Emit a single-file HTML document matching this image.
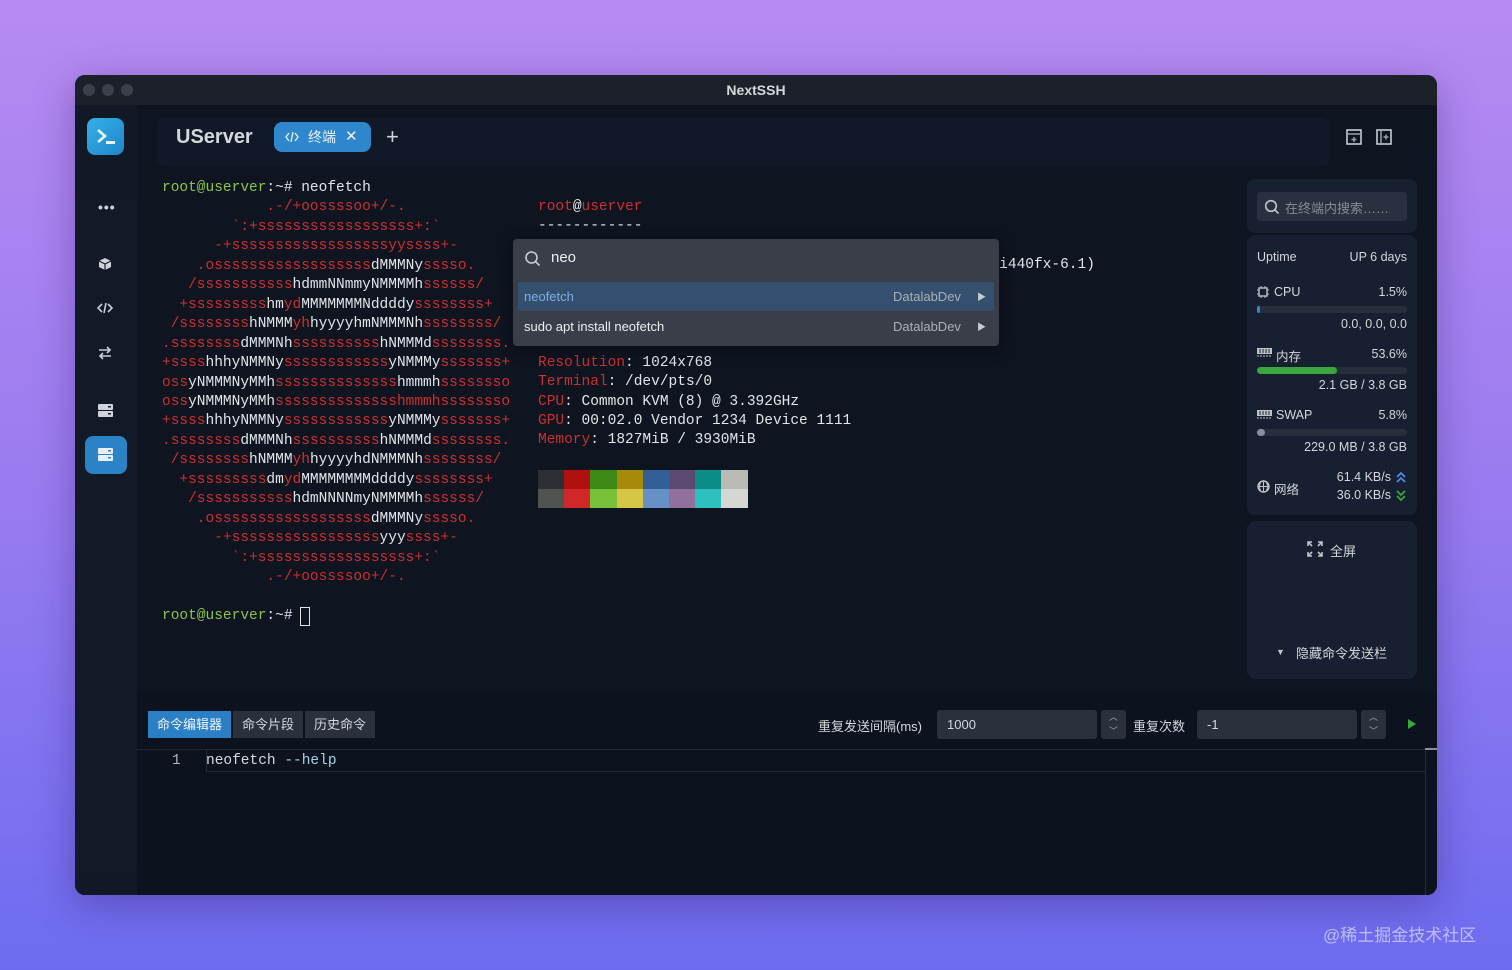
<!DOCTYPE html>
<html><head><meta charset="utf-8"><style>
*{margin:0;padding:0;box-sizing:border-box}
body{width:1512px;height:970px;overflow:hidden;background:linear-gradient(180deg,#b78af2 0%,#9a7cf0 50%,#6d6cf0 100%);font-family:"Liberation Sans","Noto Sans CJK SC",sans-serif;position:relative}
.win{position:absolute;left:75px;top:75px;width:1362px;height:820px;border-radius:10px;background:#0e1420;overflow:hidden;box-shadow:0 10px 40px rgba(40,20,90,.35)}
.title{height:30px;background:#1b2029;position:relative;text-align:center;color:#d6d8dc;font-weight:bold;font-size:14px;line-height:30px}
.dot{position:absolute;top:9px;width:12px;height:12px;border-radius:50%;background:#3c4049}
.side{position:absolute;left:0;top:30px;width:62px;bottom:0;background:#111826}
.sideinner{position:absolute;left:0;top:90px;width:62px;bottom:20px;background:#121a28;border-radius:0 8px 8px 0}
.ab{position:absolute}
.mono{font-family:"Liberation Mono","DejaVu Sans Mono",monospace;font-size:14.5px;white-space:pre;line-height:19.45px}
.r{color:#cc3030}.w{color:#e2e4e8}.g{color:#8cc34b}
.card{position:absolute;background:#172030;border-radius:8px}
.ic{stroke:#c8ccd3;fill:none;stroke-width:1.6}
</style></head><body>
<div class="win">
 <div class="title"><span class="dot" style="left:8px"></span><span class="dot" style="left:27px"></span><span class="dot" style="left:46px"></span>NextSSH</div>
 <div class="side"><div class="sideinner"></div></div>
 <div class="ab" style="left:12px;top:43px;width:37px;height:37px;border-radius:8px;background:linear-gradient(135deg,#35b0e8,#1f86c8)">
  <svg width="37" height="37"><path d="M11 12l7 6-7 6" stroke="#e8f4ff" stroke-width="2.6" fill="none"/><rect x="19" y="23" width="9" height="3" fill="#e8f4ff"/></svg></div>
 <div class="ab" style="left:23px;top:124px;color:#d0d4da;font-size:14px;font-weight:bold;letter-spacing:1px">•••</div>
 <svg class="ab" style="left:22px;top:181px" width="16" height="16"><path d="M8 2l6 3v6l-6 3-6-3V5z" fill="#d0d4da"/><path d="M2 5l6 3 6-3M8 8v6" stroke="#121a28" stroke-width="1.2" fill="none"/></svg>
 <svg class="ab" style="left:21px;top:226px" width="18" height="14"><path d="M6 3L2 7l4 4M12 3l4 4-4 4M10 2L8 12" class="ic"/></svg>
 <svg class="ab" style="left:22px;top:270px" width="16" height="16"><path d="M2 5h11M10 2l3 3-3 3M14 11H3M6 8l-3 3 3 3" class="ic" stroke-width="1.8"/></svg>
 <svg class="ab" style="left:23px;top:329px" width="15" height="14"><rect x="0" y="0" width="15" height="6" rx="1" fill="#d0d4da"/><rect x="0" y="7" width="15" height="6" rx="1" fill="#d0d4da"/><rect x="10" y="2" width="3" height="1.5" fill="#121a28"/><rect x="10" y="9" width="3" height="1.5" fill="#121a28"/></svg>
 <div class="ab" style="left:10px;top:361px;width:42px;height:38px;border-radius:8px;background:#2b82c6"></div>
 <svg class="ab" style="left:23px;top:373px" width="15" height="14"><rect x="0" y="0" width="15" height="6" rx="1" fill="#e6eef6"/><rect x="0" y="7" width="15" height="6" rx="1" fill="#e6eef6"/><rect x="10" y="2" width="3" height="1.5" fill="#2b82c6"/><rect x="10" y="9" width="3" height="1.5" fill="#2b82c6"/></svg>
 <div class="ab" style="left:82px;top:43px;width:1173px;height:48px;background:#111827;border-radius:8px"></div>
 <div class="ab" style="left:101px;top:51px;color:#d4d7dc;font-size:20px;font-weight:bold">UServer</div>
 <div class="ab" style="left:199px;top:47px;width:97px;height:30px;border-radius:8px;background:#2e86cc;color:#eaf3fb;font-size:14px;line-height:30px">
  <svg class="ab" style="left:11px;top:9px" width="14" height="12"><path d="M4 2L1 6l3 4M10 2l3 4-3 4M8 1L6 11" stroke="#eaf3fb" stroke-width="1.3" fill="none"/></svg>
  <span class="ab" style="left:34px">终端</span><span class="ab" style="left:71px;font-size:15px">✕</span></div>
 <div class="ab" style="left:311px;top:49px;color:#d0d4da;font-size:22px">+</div>
 <svg class="ab" style="left:1270px;top:53px" width="18" height="18"><rect x="2" y="2" width="14" height="14" class="ic" stroke="#9aa0a8"/><path d="M2 6h14M9 9v5M6.5 11.5h5" stroke="#9aa0a8" stroke-width="1.5"/></svg>
 <svg class="ab" style="left:1300px;top:53px" width="18" height="18"><rect x="2" y="2" width="14" height="14" class="ic" stroke="#9aa0a8"/><path d="M6 2v14M11 6.5v5M8.5 9h5" stroke="#9aa0a8" stroke-width="1.5"/></svg>
 <div class="ab mono" style="left:87px;top:104px"><span class="g">root@userver</span><span class="w">:~# neofetch</span>
<span class="r">            .-/+oossssoo+/-.</span>
<span class="r">        `:+ssssssssssssssssss+:`</span>
<span class="r">      -+ssssssssssssssssssyyssss+-</span>
<span class="r">    .ossssssssssssssssss</span><span class="w">dMMMNy</span><span class="r">sssso.</span>
<span class="r">   /sssssssssss</span><span class="w">hdmmNNmmyNMMMMh</span><span class="r">ssssss/</span>
<span class="r">  +sssssssss</span><span class="w">hm</span><span class="r">yd</span><span class="w">MMMMMMMNddddy</span><span class="r">ssssssss+</span>
<span class="r"> /ssssssss</span><span class="w">hNMMM</span><span class="r">yh</span><span class="w">hyyyyhmNMMMNh</span><span class="r">ssssssss/</span>
<span class="r">.ssssssss</span><span class="w">dMMMNh</span><span class="r">ssssssssss</span><span class="w">hNMMMd</span><span class="r">ssssssss.</span>
<span class="r">+ssss</span><span class="w">hhhyNMMNy</span><span class="r">ssssssssssss</span><span class="w">yNMMMy</span><span class="r">sssssss+</span>
<span class="r">oss</span><span class="w">yNMMMNyMMh</span><span class="r">ssssssssssssss</span><span class="w">hmmmh</span><span class="r">ssssssso</span>
<span class="r">oss</span><span class="w">yNMMMNyMMh</span><span class="r">sssssssssssssshmmmhssssssso</span>
<span class="r">+ssss</span><span class="w">hhhyNMMNy</span><span class="r">ssssssssssss</span><span class="w">yNMMMy</span><span class="r">sssssss+</span>
<span class="r">.ssssssss</span><span class="w">dMMMNh</span><span class="r">ssssssssss</span><span class="w">hNMMMd</span><span class="r">ssssssss.</span>
<span class="r"> /ssssssss</span><span class="w">hNMMM</span><span class="r">yh</span><span class="w">hyyyyhdNMMMNh</span><span class="r">ssssssss/</span>
<span class="r">  +sssssssss</span><span class="w">dm</span><span class="r">yd</span><span class="w">MMMMMMMMddddy</span><span class="r">ssssssss+</span>
<span class="r">   /sssssssssss</span><span class="w">hdmNNNNmyNMMMMh</span><span class="r">ssssss/</span>
<span class="r">    .ossssssssssssssssss</span><span class="w">dMMMNy</span><span class="r">sssso.</span>
<span class="r">      -+sssssssssssssssss</span><span class="w">yyy</span><span class="r">ssss+-</span>
<span class="r">        `:+ssssssssssssssssss+:`</span>
<span class="r">            .-/+oossssoo+/-.</span>

<span class="g">root@userver</span><span class="w">:~# </span></div>
 <div class="ab" style="left:225px;top:532px;width:10px;height:19px;border:1.5px solid #e2e4e8"></div>
 <div class="ab mono" style="left:463px;top:123px"><span class="r">root</span><span class="w">@</span><span class="r">userver</span>
<span class="w">------------</span>

<span class="r">Host</span><span class="w">: KVM/QEMU (Standard PC (i440FX + PIIX, 1996) pc-i440fx-6.1)</span>
<span class="r">Kernel</span><span class="w">: 5.15.0-generic</span>
<span class="r">Uptime</span><span class="w">: 6 days</span>
<span class="r">Packages</span><span class="w">: 612 (dpkg)</span>
<span class="r">Shell</span><span class="w">: bash 5.1.16</span>
<span class="r">Resolution</span><span class="w">: 1024x768</span>
<span class="r">Terminal</span><span class="w">: /dev/pts/0</span>
<span class="r">CPU</span><span class="w">: Common KVM (8) @ 3.392GHz</span>
<span class="r">GPU</span><span class="w">: 00:02.0 Vendor 1234 Device 1111</span>
<span class="r">Memory</span><span class="w">: 1827MiB / 3930MiB</span></div>
 <div class="ab" style="left:463px;top:395px;display:grid;grid-template-columns:repeat(8,26.2px);grid-template-rows:19px 19px">
  <div style="background:#2c2f33"></div><div style="background:#b01010"></div><div style="background:#3e8a16"></div><div style="background:#a88a0a"></div><div style="background:#315f96"></div><div style="background:#5c4a70"></div><div style="background:#0c8c86"></div><div style="background:#b8bab6"></div>
  <div style="background:#505350"></div><div style="background:#d02828"></div><div style="background:#78c03a"></div><div style="background:#d6c646"></div><div style="background:#6690c6"></div><div style="background:#92709c"></div><div style="background:#2ec0be"></div><div style="background:#d6d6d2"></div></div>
 <div class="ab" style="left:438px;top:164px;width:486px;height:107px;background:#3a3e48;border-radius:4px;box-shadow:0 4px 14px rgba(0,0,0,.4)">
  <svg class="ab" style="left:11px;top:11px" width="18" height="18"><circle cx="7.5" cy="7.5" r="5.5" stroke="#c8ccd2" stroke-width="1.6" fill="none"/><path d="M11.5 11.5l4 4" stroke="#c8ccd2" stroke-width="1.6"/></svg>
  <div class="ab" style="left:38px;top:10px;color:#eceef0;font-size:15px">neo</div>
  <div class="ab" style="left:5px;top:43px;width:476px;height:29px;background:#34506e;border-radius:2px"></div>
  <div class="ab" style="left:11px;top:50px;color:#7eaee8;font-size:13px">neofetch</div>
  <div class="ab" style="left:380px;top:50px;color:#aab0b8;font-size:13px">DatalabDev</div>
  <div class="ab" style="left:464px;top:51px;color:#c8ccd2;font-size:9px">▶</div>
  <div class="ab" style="left:11px;top:80px;color:#eceef0;font-size:13px">sudo apt install neofetch</div>
  <div class="ab" style="left:380px;top:80px;color:#aab0b8;font-size:13px">DatalabDev</div>
  <div class="ab" style="left:464px;top:81px;color:#c8ccd2;font-size:9px">▶</div>
 </div>
 <div class="card" style="left:1172px;top:104px;width:170px;height:54px"></div>
 <div class="ab" style="left:1182px;top:117px;width:150px;height:29px;background:#273140;border-radius:4px">
  <svg class="ab" style="left:7px;top:7px" width="16" height="16"><circle cx="7" cy="7" r="5.3" stroke="#c0c4ca" stroke-width="1.6" fill="none"/><path d="M11 11l3.5 3.5" stroke="#c0c4ca" stroke-width="1.6"/></svg>
  <div class="ab" style="left:28px;top:6px;color:#868c96;font-size:13px">在终端内搜索……</div></div>
 <div class="card" style="left:1172px;top:160px;width:170px;height:280px"></div>
 <div class="ab" style="left:1182px;top:175px;width:150px;font-size:12.5px;color:#d4d7dc">
  <div class="ab" style="left:0;top:0">Uptime</div><div class="ab" style="right:0;top:0">UP 6 days</div>
  <svg class="ab" style="left:0;top:36px" width="12" height="12"><rect x="2" y="2" width="8" height="8" stroke="#c0c4ca" stroke-width="1.4" fill="none"/><path d="M4 0v2M8 0v2M4 10v2M8 10v2M0 4h2M0 8h2M10 4h2M10 8h2" stroke="#c0c4ca"/></svg>
  <div class="ab" style="left:17px;top:35px">CPU</div><div class="ab" style="right:0;top:35px">1.5%</div>
  <div class="ab" style="left:0;top:56px;width:150px;height:7px;border-radius:4px;background:#262f3c"><div style="width:3px;height:7px;border-radius:3px;background:#2e86cc"></div></div>
  <div class="ab" style="right:0;top:67px">0.0, 0.0, 0.0</div>
  <svg class="ab" style="left:0;top:97px" width="15" height="10"><rect x="0" y="1" width="15" height="6" fill="#c0c4ca"/><path d="M3 2v4M6 2v4M9 2v4M12 2v4" stroke="#172030"/><path d="M1 8v2M4 8v2M7 8v2M10 8v2M13 8v2" stroke="#c0c4ca"/></svg>
  <div class="ab" style="left:19px;top:96px">内存</div><div class="ab" style="right:0;top:97px">53.6%</div>
  <div class="ab" style="left:0;top:117px;width:150px;height:7px;border-radius:4px;background:#262f3c"><div style="width:80px;height:7px;border-radius:4px;background:#3aa63e"></div></div>
  <div class="ab" style="right:0;top:128px">2.1 GB / 3.8 GB</div>
  <svg class="ab" style="left:0;top:159px" width="15" height="10"><rect x="0" y="1" width="15" height="6" fill="#c0c4ca"/><path d="M3 2v4M6 2v4M9 2v4M12 2v4" stroke="#172030"/><path d="M1 8v2M4 8v2M7 8v2M10 8v2M13 8v2" stroke="#c0c4ca"/></svg>
  <div class="ab" style="left:19px;top:158px">SWAP</div><div class="ab" style="right:0;top:158px">5.8%</div>
  <div class="ab" style="left:0;top:179px;width:150px;height:7px;border-radius:4px;background:#262f3c"><div style="width:8px;height:7px;border-radius:4px;background:#8a909a"></div></div>
  <div class="ab" style="right:0;top:190px">229.0 MB / 3.8 GB</div>
  <svg class="ab" style="left:0;top:230px" width="13" height="13"><circle cx="6.5" cy="6.5" r="5.5" stroke="#c0c4ca" stroke-width="1.4" fill="none"/><path d="M1 6.5h11M6.5 1v11M3.5 2.5q-2 4 0 8M9.5 2.5q2 4 0 8" stroke="#c0c4ca" fill="none"/></svg>
  <div class="ab" style="left:17px;top:229px">网络</div>
  <div class="ab" style="right:16px;top:220px">61.4 KB/s</div><div class="ab" style="right:16px;top:238px">36.0 KB/s</div>
  <svg class="ab" style="right:0;top:221px" width="12" height="13"><path d="M2 6l4-4 4 4M2 11l4-4 4 4" stroke="#4a8ce0" stroke-width="1.8" fill="none"/></svg>
  <svg class="ab" style="right:0;top:239px" width="12" height="13"><path d="M2 2l4 4 4-4M2 7l4 4 4-4" stroke="#3aa63e" stroke-width="1.8" fill="none"/></svg>
 </div>
 <div class="card" style="left:1172px;top:446px;width:170px;height:158px"></div>
 <svg class="ab" style="left:1232px;top:466px" width="16" height="16"><path d="M1 5V1h4M11 1h4v4M15 11v4h-4M5 15H1v-4M1 1l4 4M15 1l-4 4M15 15l-4-4M1 15l4-4" stroke="#c0c4ca" stroke-width="1.6" fill="none"/></svg>
 <div class="ab" style="left:1255px;top:466px;color:#d4d7dc;font-size:13px">全屏</div>
 <div class="ab" style="left:1201px;top:572px;color:#c0c4ca;font-size:9px">▼</div>
 <div class="ab" style="left:1221px;top:568px;color:#d4d7dc;font-size:13px">隐藏命令发送栏</div>
 <div class="ab" style="left:62px;top:618px;width:1300px;height:202px;background:#0d131e"></div>
 <div class="ab" style="left:73px;top:636px;height:27px;font-size:13px;line-height:27px;color:#d4d7dc;display:flex;gap:2px">
  <div style="background:#2b7fc4;padding:0 9px;color:#f0f6fc">命令编辑器</div><div style="background:#2a313c;padding:0 9px">命令片段</div><div style="background:#2a313c;padding:0 9px">历史命令</div></div>
 <div class="ab" style="left:743px;top:641px;color:#d4d7dc;font-size:13px">重复发送间隔(ms)</div>
 <div class="ab" style="left:862px;top:635px;width:160px;height:29px;background:#29313d;border-radius:3px;color:#d4d7dc;font-size:13px;line-height:29px;padding-left:10px">1000</div>
 <div class="ab" style="left:1026px;top:635px;width:25px;height:29px;background:#29313d;border-radius:3px;color:#a0a6ae;font-size:9px;text-align:center;line-height:14px">︿<br>﹀</div>
 <div class="ab" style="left:1058px;top:641px;color:#d4d7dc;font-size:13px">重复次数</div>
 <div class="ab" style="left:1122px;top:635px;width:160px;height:29px;background:#29313d;border-radius:3px;color:#d4d7dc;font-size:13px;line-height:29px;padding-left:10px">-1</div>
 <div class="ab" style="left:1286px;top:635px;width:25px;height:29px;background:#29313d;border-radius:3px;color:#a0a6ae;font-size:9px;text-align:center;line-height:14px">︿<br>﹀</div>
 <svg class="ab" style="left:1332px;top:643px" width="10" height="12"><path d="M1 1l8 5-8 5z" fill="#3aa63e"/></svg>
 <div class="ab" style="left:62px;top:674px;width:1300px;height:1px;background:#1f2630"></div>
 <div class="ab" style="left:131px;top:674px;width:1219px;height:23px;border-top:1px solid #262c36;border-bottom:1px solid #262c36;border-left:1px solid #262c36"></div>
 <div class="ab" style="left:1350px;top:673px;width:12px;height:2px;background:#8a909a"></div>
 <div class="ab" style="left:1350px;top:675px;width:1px;height:145px;background:#262c36"></div>
 <div class="ab mono" style="left:97px;top:677px;color:#b0b4ba">1</div>
 <div class="ab mono" style="left:131px;top:677px;color:#d4d7dc">neofetch <span style="color:#a8d0e6">--help</span></div>
</div>
<div class="ab" style="left:1323px;top:921px;color:rgba(255,255,255,.55);font-size:17px">@稀土掘金技术社区</div>
</body></html>
